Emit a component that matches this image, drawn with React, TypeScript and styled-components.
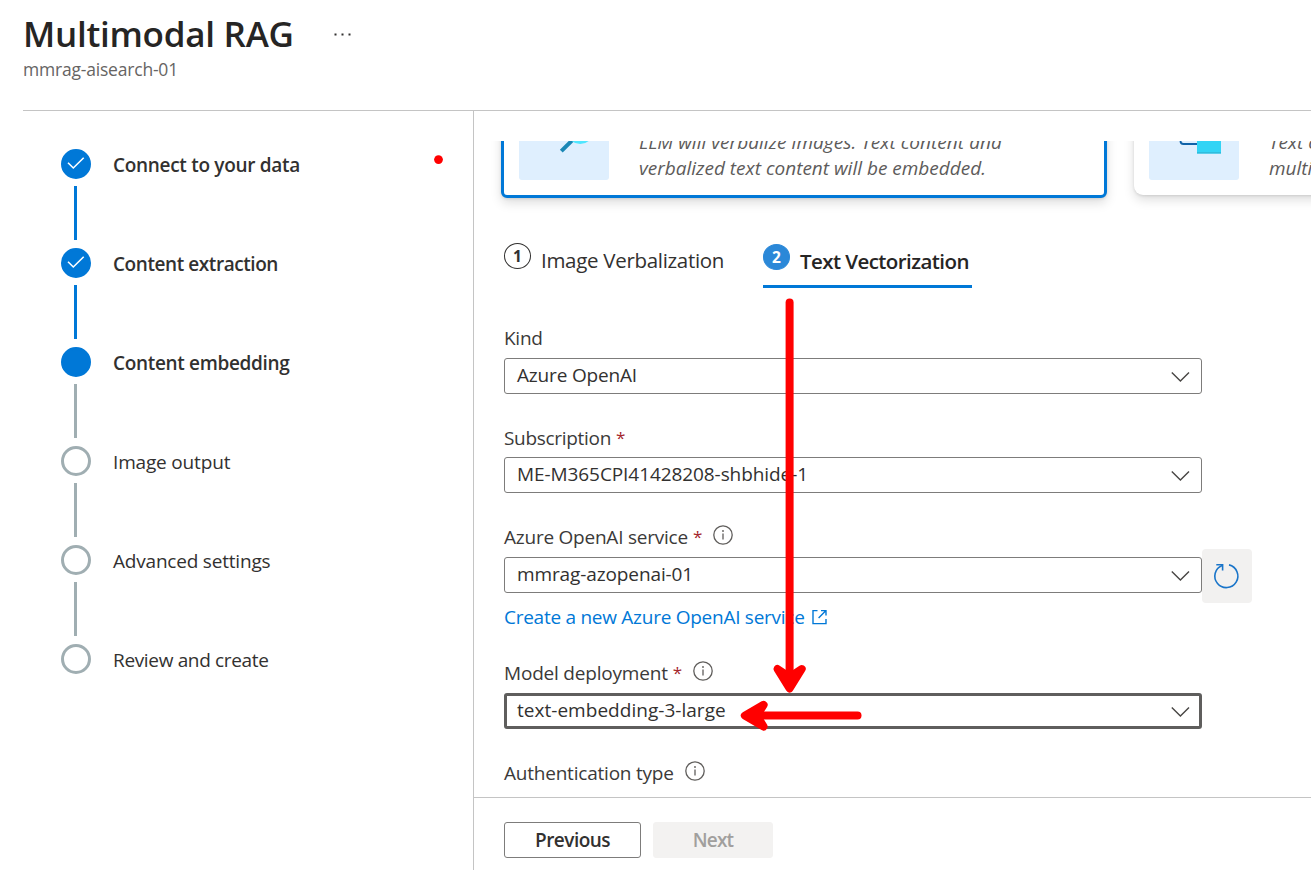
import React from 'react';
import styled, { createGlobalStyle } from 'styled-components';

const GlobalStyle = createGlobalStyle`
  *, *::before, *::after { box-sizing: border-box; }
  body {
    margin: 0;
    background: #fff;
    color: #323130;
    font-family: 'Open Sans', 'Noto Sans', sans-serif;
    font-size: 19px;
    line-height: 26px;
    overflow: hidden;
  }
`;

const Page = styled.div`
  position: relative;
  width: 1311px;
  height: 873px;
  overflow: hidden;
  padding-left: 23px;
`;

const Header = styled.header`
  height: 111px;
  padding-top: 10px;
  border-bottom: 1px solid #c4c4c4;
`;

const TitleRow = styled.div`
  display: flex;
  align-items: center;
  gap: 39px;
  height: 48px;
`;

const Title = styled.h1`
  margin: 0;
  font-size: 35px;
  line-height: 48px;
  font-weight: 600;
  letter-spacing: -0.27px;
  color: #262524;
`;

const Subtitle = styled.div`
  font-size: 17.5px;
  line-height: 23px;
  letter-spacing: -0.2px;
  color: #666463;
`;

const Body = styled.div`
  display: flex;
  height: 759px;
`;

const Sidebar = styled.nav`
  width: 450px;
  flex: none;
  padding: 38px 0 0 38px;
`;

const StepItem = styled.div`
  display: flex;
  gap: 22px;
  height: 99px;
`;

const StepTrack = styled.div`
  width: 30px;
  display: flex;
  flex-direction: column;
  align-items: center;
  gap: 7px;
`;

const StepCircle = styled.div<{ $filled: boolean }>`
  width: 30px;
  height: 30px;
  border-radius: 50%;
  border: 3px solid ${p => (p.$filled ? '#0078d7' : '#a0aeb2')};
  background: ${p => (p.$filled ? '#0078d7' : '#fff')};
  svg { display: block; margin: -3px; }
`;

const StepLine = styled.div<{ $done: boolean }>`
  width: 3px;
  height: 54px;
  margin-right: 1px;
  background: ${p => (p.$done ? '#0078d7' : '#a0aeb2')};
`;

const StepLabel = styled.div<{ $strong: boolean; $track: number }>`
  padding-top: 3px;
  font-weight: ${p => (p.$strong ? 600 : 400)};
  letter-spacing: ${p => p.$track}px;
  white-space: nowrap;
`;

const Main = styled.main`
  flex: 1;
  min-width: 0;
  display: flex;
  flex-direction: column;
  border-left: 1px solid #c4c4c4;
  padding-top: 30px;
`;

const ScrollArea = styled.section`
  height: 656px;
  overflow: hidden;
  padding-left: 27px;
`;

const Cards = styled.div`
  display: flex;
  gap: 27px;
  margin-top: -69px;
  width: 1300px;
`;

const Card = styled.div<{ $selected?: boolean }>`
  width: 606px;
  height: ${p => (p.$selected ? 126 : 120)}px;
  margin-top: ${p => (p.$selected ? 0 : 3)}px;
  flex: none;
  display: flex;
  gap: 30px;
  padding: 15px;
  border: ${p => (p.$selected ? '3px solid #0078d7' : 'none')};
  border-radius: ${p => (p.$selected ? 6 : 9)}px;
  background: #fff;
  box-shadow: 0 5px 11px rgba(0, 0, 0, 0.13), 0 1px 3px rgba(0, 0, 0, 0.11);
`;

const Thumb = styled.div`
  width: 90px;
  height: 90px;
  flex: none;
  border-radius: 3px;
  background: #dfeffe;
  svg { display: block; }
`;

const CardText = styled.div`
  align-self: flex-end;
  margin-bottom: -1px;
  font-style: italic;
  color: #5d5b5a;
  white-space: nowrap;
`;

const CardLine = styled.div<{ $track?: number }>`
  letter-spacing: ${p => p.$track ?? 0}px;
`;

const Tabs = styled.div`
  display: flex;
  gap: 39px;
  margin: 45px 0 0 3px;
  height: 45px;
`;

const Tab = styled.div<{ $active?: boolean }>`
  display: flex;
  gap: 10px;
  padding-top: ${p => (p.$active ? 1 : 0)}px;
  width: ${p => (p.$active ? 209 : 220)}px;
  border-bottom: ${p => (p.$active ? '3px solid #0078d7' : 'none')};
`;

const TabNumber = styled.span<{ $active?: boolean }>`
  flex: none;
  width: 27px;
  height: 26px;
  border-radius: 50%;
  border: 1px solid ${p => (p.$active ? '#2b88d8' : '#323130')};
  background: ${p => (p.$active ? '#2b88d8' : '#fff')};
  color: ${p => (p.$active ? '#fff' : '#323130')};
  font-family: 'Noto Sans', 'Open Sans', sans-serif;
  font-size: 15.5px;
  line-height: 24px;
  font-weight: 700;
  text-align: center;
`;

const TabLabel = styled.span<{ $active?: boolean }>`
  margin-top: 3px;
  font-size: 20.5px;
  line-height: 28px;
  font-weight: ${p => (p.$active ? 600 : 400)};
  letter-spacing: ${p => (p.$active ? -0.57 : -0.3)}px;
  color: ${p => (p.$active ? '#262524' : '#323130')};
  white-space: nowrap;
`;

const Form = styled.div`
  margin: 37px 0 0 3px;
`;

const Field = styled.div<{ $gap: number }>`
  display: flex;
  flex-direction: column;
  gap: ${p => p.$gap}px;
  margin-bottom: 31px;
`;

const Label = styled.div`
  display: flex;
  height: 26px;
  color: #3b3a39;
  white-space: nowrap;
`;

const LabelText = styled.span<{ $track: number }>`
  letter-spacing: ${p => p.$track}px;
`;

const Star = styled.span`
  width: 8px;
  margin-left: 5px;
  font-size: 17px;
  color: #a4262c;
`;

const InfoSvg = styled.svg<{ $left: number }>`
  margin: 1px 0 0 ${p => p.$left}px;
`;

const SelectRow = styled.div`
  display: flex;
  height: 36px;
  align-items: center;
`;

const Select = styled.div<{ $focused?: boolean }>`
  width: 698px;
  height: 36px;
  display: flex;
  justify-content: space-between;
  border: ${p => (p.$focused ? '3px solid #5f5e5d' : '1px solid #7d7c7b')};
  border-radius: 3px;
  padding: ${p => (p.$focused ? '1px 9px 0 10px' : '3px 11px 0 12px')};
`;

const Value = styled.span<{ $track?: number }>`
  letter-spacing: ${p => p.$track ?? 0}px;
  white-space: nowrap;
`;

const ChevronSvg = styled.svg`
  margin-top: 8px;
`;

const RefreshButton = styled.div`
  width: 50px;
  height: 54px;
  flex: none;
  margin-top: 2px;
  border-radius: 4px;
  background: #f2f1f0;
  svg { display: block; }
`;

const CreateLink = styled.a`
  display: flex;
  gap: 7px;
  height: 26px;
  margin: -20px 0 30px;
  letter-spacing: -0.265px;
  color: #0078d7;
  white-space: nowrap;
  svg { margin-top: 5px; }
`;

const Footer = styled.footer`
  flex: 1;
  display: flex;
  gap: 12px;
  padding: 24px 0 0 30px;
  border-top: 1px solid #c4c4c4;
`;

const Button = styled.div<{ $disabled?: boolean }>`
  width: ${p => (p.$disabled ? 120 : 137)}px;
  height: 36px;
  padding-top: 4px;
  border: 1px solid ${p => (p.$disabled ? '#f3f2f1' : '#7d7c7b')};
  border-radius: 3px;
  background: ${p => (p.$disabled ? '#f3f2f1' : '#fff')};
  color: ${p => (p.$disabled ? '#a19f9d' : '#323130')};
  font-weight: 600;
  letter-spacing: ${p => (p.$disabled ? -0.8 : -0.54)}px;
  text-align: center;
`;

const Annotations = styled.svg`
  position: absolute;
  left: 0;
  top: 0;
  pointer-events: none;
`;

const Info = ({ left }: { left: number }) => (
  <InfoSvg $left={left} width="20" height="20" viewBox="0 0 20 20">
    <circle cx="10" cy="10" r="9.2" fill="none" stroke="#605e5c" strokeWidth="1.3" />
    <path d="M10 8.6V14.6" stroke="#605e5c" strokeWidth="1.3" />
    <circle cx="10" cy="6" r="0.9" fill="#605e5c" />
  </InfoSvg>
);

const Chevron = () => (
  <ChevronSvg width="20" height="14" viewBox="0 0 20 14">
    <path d="M1.8 2.4L10.4 11L19 2.4" fill="none" stroke="#484644" strokeWidth="1.4" />
  </ChevronSvg>
);

const steps = [
  { label: 'Connect to your data', state: 'done', track: -0.3 },
  { label: 'Content extraction', state: 'done', track: -0.43 },
  { label: 'Content embedding', state: 'current', track: -0.33 },
  { label: 'Image output', state: 'todo', track: -0.17 },
  { label: 'Advanced settings', state: 'todo', track: -0.2 },
  { label: 'Review and create', state: 'todo', track: -0.34 },
];

export default function App() {
  return (
    <Page>
      <GlobalStyle />
      <Header>
        <TitleRow>
          <Title>Multimodal RAG</Title>
          <svg width="20" height="6" viewBox="0 0 20 6">
            <g fill="#323130">
              <rect x="1.5" y="2.5" width="2" height="2" />
              <rect x="8.5" y="2.5" width="2" height="2" />
              <rect x="15.5" y="2.5" width="2" height="2" />
            </g>
          </svg>
        </TitleRow>
        <Subtitle>mmrag-aisearch-01</Subtitle>
      </Header>
      <Body>
        <Sidebar>
          {steps.map((s, i) => (
            <StepItem key={s.label}>
              <StepTrack>
                <StepCircle $filled={s.state !== 'todo'}>
                  {s.state === 'done' && (
                    <svg width="30" height="30" viewBox="0 0 30 30">
                      <path d="M7 13.8L12.3 19L22.7 8.8" fill="none" stroke="#fff" strokeWidth="1.6" />
                    </svg>
                  )}
                </StepCircle>
                {i < steps.length - 1 && <StepLine $done={s.state === 'done'} />}
              </StepTrack>
              <StepLabel $strong={s.state !== 'todo'} $track={s.track}>{s.label}</StepLabel>
            </StepItem>
          ))}
        </Sidebar>
        <Main>
          <ScrollArea>
            <Cards>
              <Card $selected>
                <Thumb>
                  <svg width="90" height="90" viewBox="0 0 90 90">
                    <path d="M42.3 61.2L54 49.5" stroke="#1a87b5" strokeWidth="4" />
                    <circle cx="61.2" cy="41" r="11.6" fill="#dfeffe" stroke="#50e6ff" strokeWidth="3" />
                  </svg>
                </Thumb>
                <CardText>
                  <CardLine $track={0.04}>LLM will verbalize images. Text content and</CardLine>
                  <CardLine>verbalized text content will be embedded.</CardLine>
                </CardText>
              </Card>
              <Card>
                <Thumb>
                  <svg width="90" height="90" viewBox="0 0 90 90">
                    <path d="M31.5 44V51Q31.5 54 34.5 54H50" fill="none" stroke="#0f62a8" strokeWidth="1.8" />
                    <rect x="48" y="40" width="24" height="23.5" fill="#32d4f5" />
                    <rect x="48" y="62" width="24" height="1.5" fill="#31bcdc" />
                  </svg>
                </Thumb>
                <CardText>
                  <CardLine>Text content</CardLine>
                  <CardLine>multimodal</CardLine>
                </CardText>
              </Card>
            </Cards>
            <Tabs>
              <Tab>
                <TabNumber>1</TabNumber>
                <TabLabel>Image Verbalization</TabLabel>
              </Tab>
              <Tab $active>
                <TabNumber $active>2</TabNumber>
                <TabLabel $active>Text Vectorization</TabLabel>
              </Tab>
            </Tabs>
            <Form>
              <Field $gap={7}>
                <Label><LabelText $track={-0.27}>Kind</LabelText></Label>
                <SelectRow>
                  <Select><Value $track={-0.17}>Azure OpenAI</Value><Chevron /></Select>
                </SelectRow>
              </Field>
              <Field $gap={6}>
                <Label><LabelText $track={-0.31}>Subscription</LabelText><Star>*</Star></Label>
                <SelectRow>
                  <Select><Value $track={-0.08}>ME-M365CPI41428208-shbhide-1</Value><Chevron /></Select>
                </SelectRow>
              </Field>
              <Field $gap={7}>
                <Label>
                  <LabelText $track={-0.23}>Azure OpenAI service</LabelText><Star>*</Star><Info left={12} />
                </Label>
                <SelectRow>
                  <Select><Value $track={-0.11}>mmrag-azopenai-01</Value><Chevron /></Select>
                  <RefreshButton>
                    <svg width="50" height="54" viewBox="0.7 0 50 54">
                      <path d="M27.7 15.9A11.5 11.5 0 1 1 20.8 16.4" fill="none" stroke="#1a75c9" strokeWidth="1.6" />
                      <path d="M15 15.7H21.3V21.5" fill="none" stroke="#1a75c9" strokeWidth="1.6" />
                    </svg>
                  </RefreshButton>
                </SelectRow>
              </Field>
              <CreateLink>
                Create a new Azure OpenAI service
                <svg width="16" height="16" viewBox="0 0 16 16">
                  <path d="M5.5 1.6H1V14.6H14V10M9 1.6H14V6.5M14 1.6L6.6 9" fill="none" stroke="#0078d7" strokeWidth="1.4" />
                </svg>
              </CreateLink>
              <Field $gap={7}>
                <Label>
                  <LabelText $track={-0.195}>Model deployment</LabelText><Star>*</Star><Info left={12} />
                </Label>
                <SelectRow>
                  <Select $focused><Value $track={0.03}>text-embedding-3-large</Value><Chevron /></Select>
                </SelectRow>
              </Field>
              <Label>
                <LabelText $track={-0.215}>Authentication type</LabelText><Info left={11} />
              </Label>
            </Form>
          </ScrollArea>
          <Footer>
            <Button>Previous</Button>
            <Button $disabled>Next</Button>
          </Footer>
        </Main>
      </Body>
      <Annotations width="1311" height="873" viewBox="0 0 1311 873">
        <circle cx="438.5" cy="159.6" r="4.4" fill="#f00" />
        <g fill="#f00" stroke="#f00" strokeWidth="8" strokeLinecap="round" strokeLinejoin="round">
          <path d="M789.6 302.5V680" />
          <path d="M777.5 669L789.6 688.5L801.7 669L789.6 677Z" />
          <path d="M857.5 715.6H754" />
          <path d="M763.6 704.8L744.8 715.6L763.6 726.6L757 715.6Z" />
        </g>
      </Annotations>
    </Page>
  );
}
